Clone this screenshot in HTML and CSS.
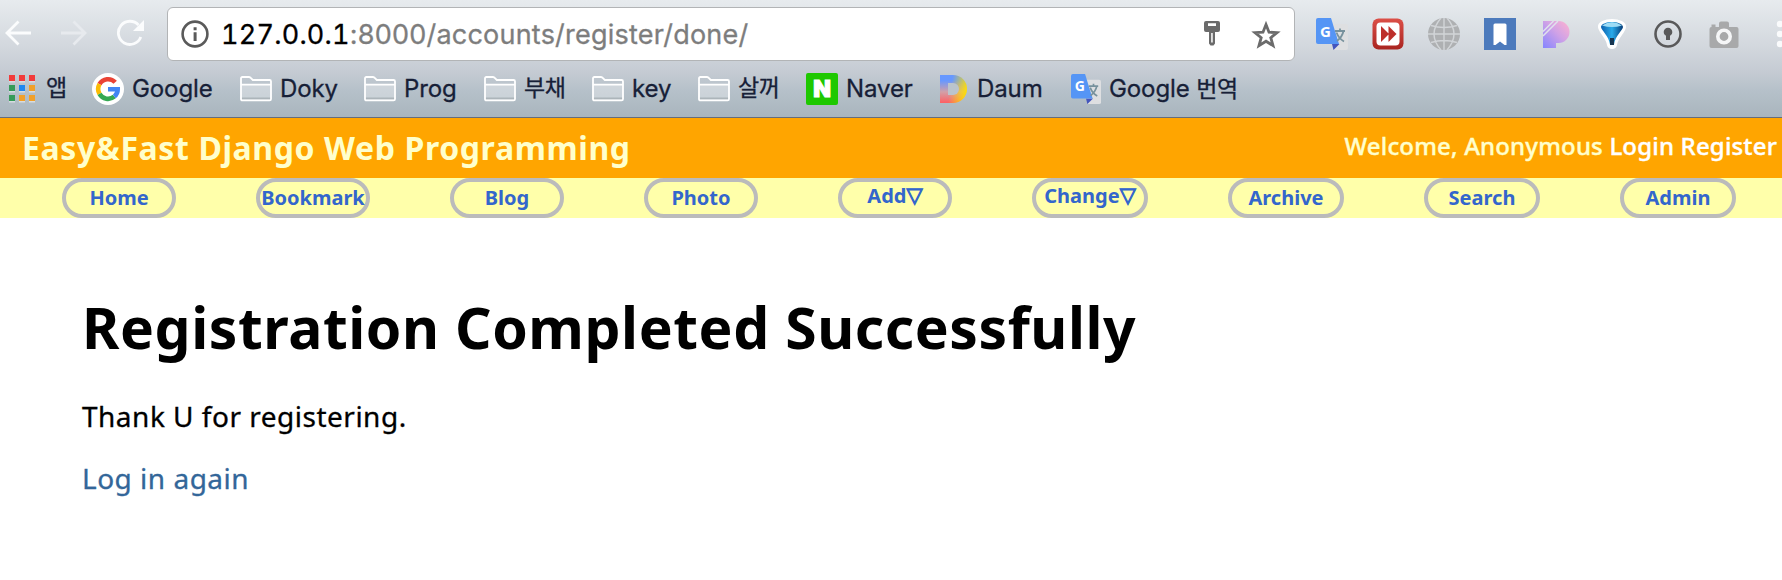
FILE: index.html
```
<!DOCTYPE html>
<html lang="ko">
<head>
<meta charset="utf-8">
<title>Registration Completed</title>
<link rel="stylesheet" href="styles.css">
</head>
<body>
<svg width="0" height="0" class="defs">
  <defs>
    <symbol id="folder" viewBox="0 0 32 26">
      <path d="M1 8.5h30V24.3H1z" fill="#fff" fill-opacity=".32"/>
      <path d="M1 21.5h30v2H1z" fill="#a0a8ae" fill-opacity=".7"/>
      <path d="M1 23V2.4Q1 1 2.4 1H9q1.2 0 2 1.2L12.8 4H29.6Q31 4 31 5.4V23q0 1.4-1.4 1.4H2.4Q1 24.400 1 23zM1 8.600h30" fill="none" stroke="#fff" stroke-width="1.8"/>
    </symbol>
    <symbol id="translate" viewBox="0 0 32 32">
      <path d="M12 6h18q2 0 2 2v22q0 2-2 2H18z" fill="#dedfe1"/>
      <path d="M16 26h7.500l-6 6z" fill="#4355bd"/>
      <path d="M2 0h13l8 26H2q-2 0-2-2V2q0-2 2-2z" fill="#5595f5"/>
      <text x="4" y="18.500" class="glyph-g">G</text>
      <path d="M19 13h10M24 10.500v2.500M27.500 13c-1 5-4 8-6.500 10M20.500 14.500c1.500 4 4 7 7.500 9" fill="none" stroke="#78929d" stroke-width="1.800"/>
    </symbol>
    <linearGradient id="red" x2="0" y2="1"><stop stop-color="#dc4f47"/><stop offset="1" stop-color="#a92420"/></linearGradient>
    <linearGradient id="pink" x1="0" y1="1" x2="1" y2="0"><stop stop-color="#8585ff"/><stop offset=".55" stop-color="#d1a2e6"/><stop offset="1" stop-color="#ffb3cf"/></linearGradient>
    <linearGradient id="blue"><stop stop-color="#0b5fae"/><stop offset=".5" stop-color="#29abea"/><stop offset="1" stop-color="#063c78"/></linearGradient>
  </defs>
</svg>

<header class="browser">
  <div class="toolbar">
    <nav class="controls">
      <svg width="28" height="28" viewBox="0 0 28 28"><path d="M27 14H3M14.500 2.500L3 14l11.500 11.500" fill="none" stroke="#fbfcfd" stroke-width="2.800"/></svg>
      <svg width="28" height="28" viewBox="0 0 28 28"><path d="M1 14h24M13.500 2.500L25 14 13.500 25.500" fill="none" stroke="#e7eaee" stroke-width="2.800"/></svg>
      <svg width="28" height="28" viewBox="0 0 28 28"><path d="M22.500 6A11.600 11.600 0 1 0 24.800 18" fill="none" stroke="#fbfcfd" stroke-width="2.800"/><path d="M28 1v11H17z" fill="#fbfcfd"/></svg>
    </nav>
    <div class="address">
      <svg class="info" width="28" height="28" viewBox="0 0 28 28"><circle cx="14" cy="14" r="12.400" fill="none" stroke="#5a5a5a" stroke-width="2.600"/><path d="M12.600 7.300h3v3h-3zM12.600 12.300h3v8.700h-3z" fill="#5a5a5a"/></svg>
      <span class="url"><span class="host">127.0.0.1</span><span class="path">:8000/accounts/register/done/</span></span>
      <svg class="key" width="16" height="26" viewBox="0 0 16 26"><path fill-rule="evenodd" fill="#6b6b6b" d="M2 0h12q2 0 2 2v7q0 2-2 2h-3v11.500L9.500 24.500h-3L5 22.500V11H2Q0 11 0 9V2Q0 0 2 0zM4 2.300v2.600h8V2.300zM7.200 12v9.500h1.500V12z"/></svg>
      <svg class="star" width="30" height="29" viewBox="0 0 30 29"><path d="M15 4.500l3 7.700 8 .5-6.200 5 2.200 7.900-7-4.400-7 4.400 2.200-7.900-6.200-5 8-.5z" fill="none" stroke="#6b6b6b" stroke-width="2.800"/></svg>
    </div>
    <div class="extensions">
      <svg viewBox="0 0 32 32"><use href="#translate"/></svg>
      <svg viewBox="0 0 32 32"><rect x=".5" y=".5" width="31" height="31" rx="6" fill="url(#red)"/><rect x="4.500" y="4.500" width="23" height="23" rx="4" fill="#fff"/><path d="M9 8l8 8-8 8zM16.500 8l8 8-8 8z" fill="#bd2f2a"/></svg>
      <svg viewBox="0 0 32 32"><circle cx="16" cy="16" r="16" fill="#aeb0b2"/><path d="M16 0v32M0 16h32M3 7.500q13 4 26 0M3 24.500q13-4 26 0M13 0Q-1 16 13 32M19 0Q33 16 19 32" fill="none" stroke="#d2d5d8" stroke-width="1.400"/></svg>
      <svg viewBox="0 0 32 32"><path d="M0 0h32v32H0z" fill="#4c7abc"/><path d="M9.500 7q0-1.500 1.500-1.500h10q1.500 0 1.500 1.500v20h-2L16 23.500 11.500 27h-2z" fill="#fff"/></svg>
      <svg viewBox="0 0 32 32"><path d="M3 3h15.500a11 11 0 1 1 0 22H16v5H3z" fill="url(#pink)"/><path d="M3 13.500L13.500 3M3 18L18 3" stroke="#e0e2ec" stroke-width="1.500"/></svg>
      <svg viewBox="0 0 32 32"><path d="M16 2.500c7 0 13 3 12.500 6.500C28 14 20 20 19.500 27q-.5 2.500-3.500 2.500t-3.500-2.500C12 20 4 14 3.500 9 3 5.500 9 2.500 16 2.500z" fill="#fff" stroke="#fff" stroke-width="3"/><path d="M16 4c5.500 0 11 2 11 5S19 18 18 26.500h-4C13 18 5 12 5 9s5.500-5 11-5z" fill="url(#blue)"/><path d="M6 7.500Q16 1 26 7.500 16 10.500 6 7.500z" fill="#9edcf5"/><path d="M14 20h4v7h-4z" fill="#173651"/></svg>
      <svg viewBox="0 0 32 32"><circle cx="16" cy="16" r="12.500" fill="none" stroke="#59595a" stroke-width="2.600"/><circle cx="16" cy="14" r="4.300" fill="#59595a"/><path d="M14 15h4v7h-4z" fill="#59595a"/></svg>
      <svg viewBox="0 0 32 32"><path d="M1.500 11q0-2 2-2V6.500h4V9H11V5.500q0-2 2-2h6q2 0 2 2V9h7.500q2 0 2 2v17q0 2-2 2h-25q-2 0-2-2z" fill="#a8a9aa"/><circle cx="16" cy="18.500" r="6.200" fill="#a8a9aa" stroke="#f5f6f7" stroke-width="3.600"/></svg>
      <svg viewBox="0 0 32 32"><g fill="#fafbfc"><circle cx="16" cy="6" r="3.200"/><circle cx="16" cy="16" r="3.200"/><circle cx="16" cy="26" r="3.200"/></g></svg>
    </div>
  </div>
  <div class="bookmarks">
    <a class="apps"><svg width="27" height="28" viewBox="0 0 27 28"><path d="M0 6h6v1.500H0zM10 6h6v1.500h-6zM20 6h6v1.500h-6zM0 16h6v1.500H0zM10 16h6v1.500h-6zM20 16h6v1.500h-6zM0 26h6v1.500H0zM10 26h6v1.500h-6zM20 26h6v1.500h-6z" fill="#d6dce0"/><path d="M0 0h6v6H0zM10 0h6v6h-6zM20 0h6v6h-6z" fill="#f23b3b"/><path d="M0 10h6v6H0zM0 20h6v6H0z" fill="#359b58"/><path d="M10 10h6v6h-6z" fill="#2087f0"/><path d="M20 10h6v6h-6zM10 20h6v6h-6zM20 20h6v6h-6z" fill="#f1a02a"/></svg><span class="ko">앱</span></a>
    <a><svg width="32" height="32" viewBox="0 0 32 32"><circle cx="16" cy="16" r="16" fill="#fff"/><g fill="none" stroke-width="4.600"><path d="M23.200 9.300A9.800 9.800 0 0 0 7.500 11.200" stroke="#ea4335"/><path d="M7.500 11.200a9.800 9.800 0 0 0 0 9.700" stroke="#fbbc05"/><path d="M7.500 20.900a9.800 9.800 0 0 0 14.800 2.600" stroke="#34a853"/><path d="M16 16.300h9.700q0 4.700-3.400 7.200" stroke="#4285f4"/></g></svg>Google</a>
    <a><svg class="folder"><use href="#folder"/></svg>Doky</a>
    <a><svg class="folder"><use href="#folder"/></svg>Prog</a>
    <a><svg class="folder"><use href="#folder"/></svg><span class="ko">부채</span></a>
    <a><svg class="folder"><use href="#folder"/></svg>key</a>
    <a><svg class="folder"><use href="#folder"/></svg><span class="ko">살꺼</span></a>
    <a><span class="naver">N</span>Naver</a>
    <a class="daum"><span class="daum-mark"><i></i></span>Daum</a>
    <a><svg width="30" height="30" viewBox="0 0 32 32"><use href="#translate"/></svg><span class="mixed">Google <span class="ko">번역</span></span></a>
  </div>
</header>

<header class="banner">
  <div class="brand">Easy&amp;Fast Django Web Programming</div>
  <div class="welcome">Welcome, Anonymous <a>Login</a> <a>Register</a></div>
</header>
<nav class="menu">
  <a>Home</a><a>Bookmark</a><a>Blog</a><a>Photo</a><a class="drop">Add<span>▽</span></a><a class="drop wide">Change<span>▽</span></a><a class="wide">Archive</a><a class="wide">Search</a><a class="wide">Admin</a>
</nav>
<main class="content">
  <h1>Registration Completed Successfully</h1>
  <p>Thank U for registering.</p>
  <p><a>Log in again</a></p>
</main>
</body>
</html>
```
FILE: styles.css
```
* { box-sizing: border-box; }
body { margin: 0; background: #fff; color: #000; font-family: "Noto Sans", sans-serif; overflow: hidden; }
svg { display: block; flex: none; }
.defs { position: absolute; }

.browser { height: 118px; overflow: hidden; border-bottom: 1px solid #656d7c; background: linear-gradient(#e7ebee, #d3d8de 45px, #c5cbd3 72px, #b6c1ca 90px, #a9b5bd 117px); font-family: Inter, "Noto Sans CJK KR", sans-serif; }
.toolbar { display: flex; height: 61px; padding-top: 7px; }
.controls { flex: none; display: flex; gap: 28px; width: 167px; padding: 12px 0 0 4px; }
.address { flex: none; display: flex; align-items: center; width: 1128px; height: 54px; padding: 0 13px; background: #fff; border: 1px solid #b2b4b6; border-radius: 6px; }
.url { flex: 1; margin: 2px 0 0 12px; font-size: 27px; line-height: 40px; white-space: nowrap; letter-spacing: .22px; -webkit-text-stroke: .3px; }
.host { color: #000; font-kerning: none; font-variant-numeric: tabular-nums; }
.path { color: #7d7d7d; }
.key { margin-right: 31px; }
.glyph-g { font: bold 15px "Open Sans", sans-serif; fill: #fff; }
.extensions { flex: none; display: flex; gap: 24px; padding: 11px 0 0 21px; }
.extensions svg { width: 32px; height: 32px; }

.bookmarks { display: grid; grid-template-columns: 83px 148px 124px 120px 108px 106px 108px 134px 131px 1fr; align-items: center; height: 56px; padding-left: 9px; color: #172037; font-size: 24px; letter-spacing: -.1px; -webkit-text-stroke: .3px; }
.bookmarks a { display: flex; align-items: center; gap: 8px; height: 34px; line-height: 32px; white-space: nowrap; }
.bookmarks .apps, .bookmarks .daum { gap: 10px; }
.bookmarks .ko { font-size: 23px; line-height: 30px; letter-spacing: -.4px; margin-bottom: 2px; }
.bookmarks .mixed { height: 33px; }
.folder { width: 32px; height: 26px; }
.naver { display: grid; place-items: center; width: 32px; height: 32px; background: #1ec800; border-radius: 2px; color: #fff; font-size: 23px; font-weight: 900; -webkit-text-stroke: 1px #fff; }
.daum-mark { display: flex; width: 27px; height: 28px; padding: 8px; border-radius: 0 14px 14px 0; background: linear-gradient(100deg, transparent 40%, #ffe000 95%), linear-gradient(#6798ff 20%, #d2a0a8 60%, #ff5f62); }
.daum-mark i { width: 12px; height: 12px; border-radius: 0 6px 6px 0; background: #bbc4cc; }

.banner { display: flex; justify-content: space-between; align-items: center; height: 60px; padding: 0 5px 0 22px; background: orange; color: #ffc; }
.brand { font-size: 32px; font-weight: bold; line-height: 44px; letter-spacing: .6px; margin-bottom: 1px; }
.welcome { font-size: 24px; font-weight: 500; line-height: 34px; letter-spacing: .17px; margin-bottom: 4px; -webkit-text-stroke: .4px; }
.welcome a { color: #fff; }

.menu { display: flex; gap: 80px; height: 40px; padding-left: 62px; background: #ffa; }
.menu a { flex: none; display: flex; justify-content: center; width: 114px; height: 40px; border: 4px solid #bbb; border-radius: 20px; color: #36c; font-size: 20px; font-weight: bold; line-height: 32px; }
.menu .wide { width: 116px; }
.menu .drop { line-height: 28px; }
.menu .drop span { font-family: "DejaVu Sans", sans-serif; font-size: 21px; line-height: 26px; -webkit-text-stroke: 1px; }

.content { padding: 71px 82px 0; }
h1 { margin: 0; font-size: 57px; line-height: 76px; letter-spacing: .57px; }
p { margin: 0; font-size: 28px; line-height: 40px; letter-spacing: .5px; -webkit-text-stroke: .3px; }
p:first-of-type { margin: 31px 0 22px; }
p a { color: #369; }
```
